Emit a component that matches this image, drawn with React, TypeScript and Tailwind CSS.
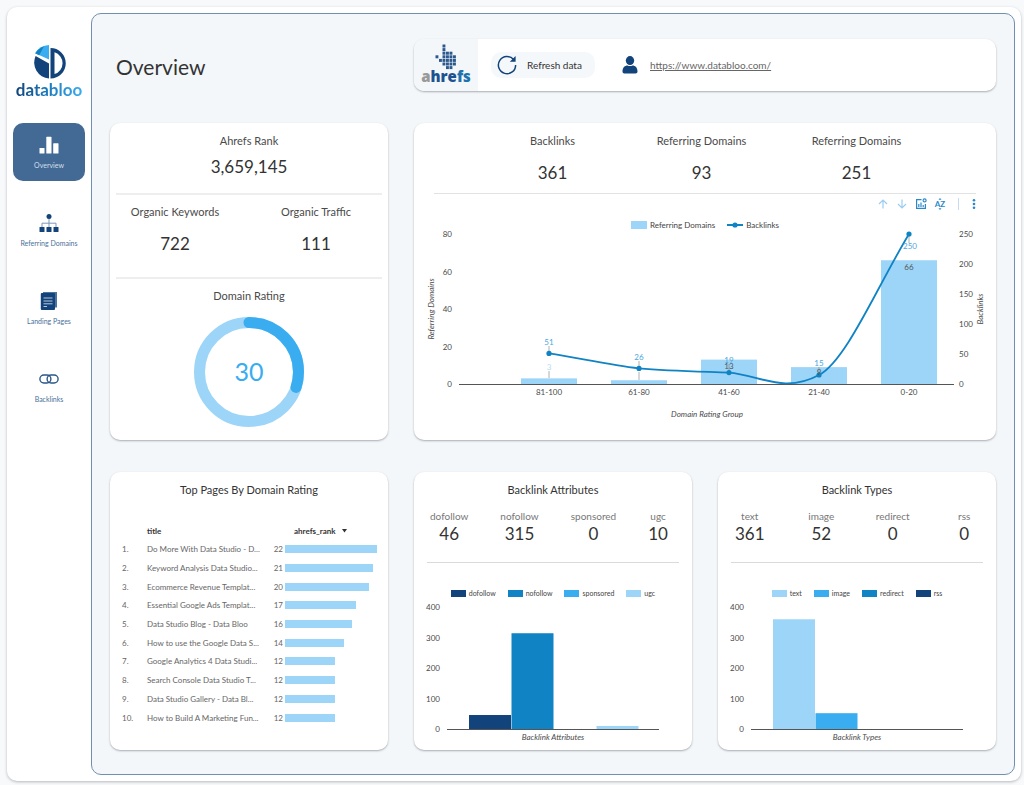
import { useState, type ReactNode } from "react";

const NAVY = "#12437a";
const OCEAN = "#1083c4";
const SKY = "#39adf0";
const PALE = "#9dd5f8";

interface Kpi {
  label: string;
  value: string;
}

interface Series {
  name: string;
  value: number;
  color: string;
}

const TOP_PAGES = [
  { title: "Do More With Data Studio - D...", rank: 22 },
  { title: "Keyword Analysis Data Studio...", rank: 21 },
  { title: "Ecommerce Revenue Templat...", rank: 20 },
  { title: "Essential Google Ads Templat...", rank: 17 },
  { title: "Data Studio Blog - Data Bloo", rank: 16 },
  { title: "How to use the Google Data S...", rank: 14 },
  { title: "Google Analytics 4 Data Studi...", rank: 12 },
  { title: "Search Console Data Studio T...", rank: 12 },
  { title: "Data Studio Gallery - Data Bl...", rank: 12 },
  { title: "How to Build A Marketing Fun...", rank: 12 },
];

const ATTRIBUTES: Series[] = [
  { name: "dofollow", value: 46, color: NAVY },
  { name: "nofollow", value: 315, color: OCEAN },
  { name: "sponsored", value: 0, color: SKY },
  { name: "ugc", value: 10, color: PALE },
];

const TYPES: Series[] = [
  { name: "text", value: 361, color: PALE },
  { name: "image", value: 52, color: SKY },
  { name: "redirect", value: 0, color: OCEAN },
  { name: "rss", value: 0, color: NAVY },
];

const RATING_GROUPS = [
  { group: "81-100", domains: 3, backlinks: 51 },
  { group: "61-80", domains: 2, backlinks: 26 },
  { group: "41-60", domains: 13, backlinks: 19 },
  { group: "21-40", domains: 9, backlinks: 15 },
  { group: "0-20", domains: 66, backlinks: 250 },
];

function Card({ className = "", children }: { className?: string; children: ReactNode }) {
  return (
    <section
      className={`flex flex-col rounded-[10px] bg-white shadow-[0_1px_2px_rgba(60,64,67,0.4)] ${className}`}
    >
      {children}
    </section>
  );
}

function Stat({ label, value, gap = "gap-3" }: Kpi & { gap?: string }) {
  return (
    <div className={`flex flex-col items-center ${gap}`}>
      <div className="text-[11px] leading-4 text-[#4a4a4a]">{label}</div>
      <div className="text-[17px] leading-6 text-[#333]">{value}</div>
    </div>
  );
}

/* ---------- icons ---------- */

function BarsIcon() {
  return (
    <svg width="20" height="18" viewBox="0 0 20 18" fill="#fff">
      <rect x="0.5" y="12" width="5" height="5.5" rx="0.6" />
      <rect x="7.3" y="0.8" width="5.2" height="16.7" rx="0.6" />
      <rect x="14.2" y="7.2" width="5.3" height="10.3" rx="0.6" />
    </svg>
  );
}

function SitemapIcon() {
  return (
    <svg width="20" height="18" viewBox="0 0 20 18" fill={NAVY}>
      <circle cx="10" cy="2.5" r="2.5" />
      <path d="M10 5v8M3 13V9.2h14V13" fill="none" stroke="#7c97b7" strokeWidth="1" />
      <rect x="0.5" y="13" width="5" height="5" rx="0.5" />
      <rect x="7.5" y="13" width="5" height="5" rx="0.5" />
      <rect x="14.5" y="13" width="5" height="5" rx="0.5" />
    </svg>
  );
}

function PagesIcon() {
  return (
    <svg width="20" height="18" viewBox="0 0 20 18">
      <path d="M4 0h14v15.5h-2V2H4z" fill={NAVY} opacity="0.75" />
      <rect x="1.8" y="1" width="14.2" height="17" rx="1" fill={NAVY} />
      <path d="M4.5 6h9M4.5 9h9M4.5 11.8h9M4.5 14.5h3.5" stroke="#b9c9dc" strokeWidth="1" />
    </svg>
  );
}

function LinksIcon() {
  return (
    <svg width="20" height="18" viewBox="0 0 20 18" fill="none" stroke="#2a5788" strokeWidth="1.4">
      <rect x="0.9" y="5" width="11" height="8" rx="4" />
      <rect x="8.1" y="5" width="11" height="8" rx="4" />
    </svg>
  );
}

function DatablooLogo() {
  return (
    <div className="flex flex-col items-center">
      <svg width="36" height="36" viewBox="-2 0 34 36">
        <path d="M15 15.5V1A17 17 0 0 0 1.2 9.2z" fill={SKY} />
        <path d="M10 2.2A17 17 0 0 0 1.2 9.2l4 2.1z" fill={OCEAN} />
        <path d="M15 19.5V34.5A16 16 0 0 1 1.6 12z" fill={NAVY} />
        <path
          fillRule="evenodd"
          fill={NAVY}
          d="M16.5 4a15.2 15.2 0 0 1 0 30.5zM20.5 8.3v21.8a11.4 11.4 0 0 0 0-21.8z"
        />
      </svg>
      <div className="bg-gradient-to-r from-[#12437a] via-[#1b78ba] via-45% to-[#39adf0] bg-clip-text text-[17px] leading-5 font-bold text-transparent">
        databloo
      </div>
    </div>
  );
}

// each row lists the filled columns of the pixel hand
const HAND = [[2], [2], [2, 3, 4], [0, 2, 3, 4, 5], [1, 2, 3, 4, 5], [2, 3, 4, 5], [3, 4]];

function AhrefsLogo() {
  return (
    <div className="flex w-16 flex-col items-center rounded-l-[10px] bg-[#f3f7fa] pt-[5px]">
      <svg width="22" height="26" viewBox="0 0 22 26">
        {HAND.map((cols, row) =>
          cols.map((col) => (
            <rect key={`${row}-${col}`} x={0.5 + col * 3.5} y={0.5 + row * 3.6} width="2.9" height="3" fill="#2c588c" />
          ))
        )}
      </svg>
      <div className="font-['Open_Sans',sans-serif] text-[15px] leading-[13px] font-extrabold text-[#1d5190]">
        <span className="text-[#999]">a</span>hre<span className="text-[#2171ac]">fs</span>
      </div>
    </div>
  );
}

function RefreshIcon() {
  return (
    <svg width="20" height="20" viewBox="0 0 20 20">
      <path d="M16.6 4.6A8.6 8.6 0 1 0 18.6 10" fill="none" stroke={NAVY} strokeWidth="1.5" />
      <path d="M18.6 1v5.8h-5.8z" fill={NAVY} />
    </svg>
  );
}

function UserIcon() {
  return (
    <svg width="16" height="18" viewBox="0 0 16 18" fill={NAVY}>
      <ellipse cx="8" cy="4.6" rx="4.2" ry="4.5" />
      <path d="M0.5 15.5c0-4 2.4-6 5-6 1.6.8 3.4.8 5 0 2.6 0 5 2 5 6 0 1.2-.7 2-2 2h-11c-1.3 0-2-.8-2-2z" />
    </svg>
  );
}

/* ---------- sidebar ---------- */

const NAV = [
  { label: "Overview", icon: <BarsIcon /> },
  { label: "Referring Domains", icon: <SitemapIcon /> },
  { label: "Landing Pages", icon: <PagesIcon /> },
  { label: "Backlinks", icon: <LinksIcon /> },
];

function Sidebar() {
  const [active, setActive] = useState("Overview");
  return (
    <aside className="w-[84px] shrink-0 px-1.5 pt-[37px]">
      <DatablooLogo />
      <nav className="mt-[23px] flex flex-col gap-5">
        {NAV.map((item) => (
          <a
            key={item.label}
            href="#"
            onClick={() => setActive(item.label)}
            className={`flex h-[58px] flex-col items-center gap-1.5 rounded-[10px] pt-[13px] text-[7px] leading-[10px] whitespace-nowrap ${
              active === item.label ? "bg-[#436a95] text-[#d4dfeb]" : "text-[#4a6f99]"
            }`}
          >
            {item.icon}
            {item.label}
          </a>
        ))}
      </nav>
    </aside>
  );
}

/* ---------- top row ---------- */

function HeaderBar() {
  return (
    <header className="col-span-2 flex h-[52px] items-center rounded-[10px] bg-white shadow-[0_1px_2px_rgba(60,64,67,0.4)]">
      <div className="flex self-stretch">
        <AhrefsLogo />
      </div>
      <button className="ml-[13px] flex h-[26px] w-[104px] items-center gap-2.5 rounded-[10px] bg-[#f5f8fa] pl-1.5 text-[10px] text-[#333]">
        <RefreshIcon />
        Refresh data
      </button>
      <div className="ml-[27px] flex items-center gap-3">
        <UserIcon />
        <a href="https://www.databloo.com/" className="text-[10px] text-[#666] underline">
          https://www.databloo.com/
        </a>
      </div>
    </header>
  );
}

function RankCard() {
  const r = 49.5;
  const length = 2 * Math.PI * r;
  return (
    <Card className="pt-2.5 pb-[13px]">
      <Stat label="Ahrefs Rank" value="3,659,145" gap="gap-1.5" />
      <hr className="mx-1.5 mt-3.5 border-t-2 border-[#eee]" />
      <div className="mt-[9px] -mr-1 grid grid-cols-[130fr_152fr]">
        <Stat label="Organic Keywords" value="722" />
        <Stat label="Organic Traffic" value="111" />
      </div>
      <hr className="mx-1.5 mt-[21px] border-t-2 border-[#eee]" />
      <div className="mt-[9px] text-center text-[11px] leading-4 text-[#4a4a4a]">Domain Rating</div>
      <svg width="110" height="110" viewBox="0 0 110 110" className="mx-auto mt-[13px]">
        <circle cx="55" cy="55" r={r} fill="none" stroke={PALE} strokeWidth="11" />
        <circle
          cx="55"
          cy="55"
          r={r}
          fill="none"
          stroke={SKY}
          strokeWidth="11"
          strokeLinecap="round"
          strokeDasharray={`${length * 0.3} ${length}`}
          transform="rotate(-90 55 55)"
        />
        <text x="55" y="64" textAnchor="middle" fontSize="25" fill={SKY}>
          30
        </text>
      </svg>
    </Card>
  );
}

function ChartToolbar() {
  return (
    <div className="mt-[3px] flex h-3.5 items-center justify-end gap-[7px] pr-4 text-[#2b88c8]">
      <button aria-label="Drill up" className="text-[#9ccdf0]">
        <svg width="12" height="12" viewBox="0 0 12 12" fill="none" stroke="currentColor" strokeWidth="1.2">
          <path d="M6 10.500V2M2 6l4-4 4 4" />
        </svg>
      </button>
      <button aria-label="Drill down" className="text-[#9ccdf0]">
        <svg width="12" height="12" viewBox="0 0 12 12" fill="none" stroke="currentColor" strokeWidth="1.2">
          <path d="M6 1.500V10M2 6l4 4 4-4" />
        </svg>
      </button>
      <button aria-label="Optional metrics">
        <svg width="12" height="12" viewBox="0 0 12 12" fill="none" stroke="currentColor" strokeWidth="1.2">
          <path d="M6.5 1.6H1.6v8.8h8.8V6M3.8 9V6M6 9V4.5M8.2 9V7" />
          <circle cx="9.6" cy="2.4" r="1.5" />
        </svg>
      </button>
      <button aria-label="Sort">
        <svg width="12" height="12" viewBox="0 0 12 12" fill="currentColor">
          <text x="6" y="9" textAnchor="middle" fontSize="8" fontWeight="700">
            AZ
          </text>
          <path d="M4.5 1.8L6 0l1.5 1.8zM4.5 10.2L6 12l1.5-1.8z" />
        </svg>
      </button>
      <span className="mr-0.5 ml-[5px] h-3 w-px bg-[#c5dcee]" />
      <button aria-label="More options">
        <svg width="12" height="12" viewBox="0 0 12 12" fill="currentColor">
          <circle cx="6" cy="2.2" r="1.3" />
          <circle cx="6" cy="6" r="1.3" />
          <circle cx="6" cy="9.8" r="1.3" />
        </svg>
      </button>
    </div>
  );
}

function RatingGroupChart() {
  const base = 153;
  const x = (i: number) => 135 + i * 90;
  const yLeft = (v: number) => base - (v / 80) * 150;
  const yRight = (v: number) => base - (v / 250) * 150;

  return (
    <svg viewBox="0 0 582 195" className="block w-full overflow-visible" fontSize="8" fill="#4a4a4a">
      {[0, 20, 40, 60, 80].map((v) => (
        <text key={v} x="38" y={yLeft(v) + 3} textAnchor="end">
          {v}
        </text>
      ))}
      {[0, 50, 100, 150, 200, 250].map((v) => (
        <text key={v} x="545" y={yRight(v) + 3}>
          {v}
        </text>
      ))}
      {RATING_GROUPS.map((d, i) => (
        <g key={d.group}>
          <rect x={x(i) - 28} y={yLeft(d.domains)} width="56" height={base - yLeft(d.domains)} fill={PALE} />
          <text x={x(i)} y="164" textAnchor="middle">
            {d.group}
          </text>
        </g>
      ))}
      <path d="M45 153.5H540" stroke="#555" strokeWidth="1" />

      {/* leader lines */}
      <path
        d="M135 115v7M135 140v7M225 130v7M225 141v8M315 133v8M405 136v8M495 5v7"
        stroke="#8d8d8d"
        strokeWidth="0.7"
      />

      <path
        d="M135 122.4C165 127 195 134 225 137.4C255 140 285 140.5 315 141.6C345 144 370 163 405 144C432 130 463 56 495 3"
        fill="none"
        stroke={OCEAN}
        strokeWidth="1.8"
      />
      {RATING_GROUPS.map((d, i) => (
        <circle key={d.group} cx={x(i)} cy={yRight(d.backlinks)} r="2.6" fill={OCEAN} />
      ))}

      <g textAnchor="middle" fill="#4ba6de">
        <text x="135" y="114">51</text>
        <text x="135" y="139" fill="#b5dcf5">3</text>
        <text x="225" y="129">26</text>
        <text x="315" y="132">19</text>
        <text x="315" y="138" fill="#555">13</text>
        <text x="405" y="135">15</text>
        <text x="405" y="144" fill="#555">9</text>
        <text x="496" y="18">250</text>
        <text x="495" y="39" fill="#555">66</text>
      </g>

      <g textAnchor="middle" fontStyle="italic">
        <text x="293" y="186">Domain Rating Group</text>
        <text transform="translate(20 78) rotate(-90)">Referring Domains</text>
        <text transform="translate(569 78) rotate(-90)">Backlinks</text>
      </g>
    </svg>
  );
}

function BacklinksCard() {
  return (
    <Card className="col-span-2 pt-2.5 pb-3.5">
      <div className="grid grid-cols-[149fr_149fr_161fr] pr-[59px] pl-16">
        <Stat label="Backlinks" value="361" />
        <Stat label="Referring Domains" value="93" />
        <Stat label="Referring Domains" value="251" />
      </div>
      <hr className="mx-5 mt-2 border-[#e2e2e2]" />
      <ChartToolbar />
      <div className="mt-2 flex h-3 items-center justify-center gap-3 text-[8px] text-[#444]">
        <span className="flex items-center gap-[3px]">
          <span className="h-2 w-4 bg-[#9dd5f8]" />
          Referring Domains
        </span>
        <span className="flex items-center gap-[3px]">
          <svg width="16" height="8" viewBox="0 0 16 8" fill={OCEAN}>
            <rect y="3" width="16" height="2" />
            <circle cx="8" cy="4" r="2.6" />
          </svg>
          Backlinks
        </span>
      </div>
      <RatingGroupChart />
    </Card>
  );
}

/* ---------- bottom row ---------- */

function TopPagesCard() {
  const [desc, setDesc] = useState(true);
  const rows = desc ? TOP_PAGES : [...TOP_PAGES].reverse();
  return (
    <Card className="pt-2.5">
      <h2 className="text-center text-[11px] leading-4 text-[#333]">Top Pages By Domain Rating</h2>
      <div className="mt-6 pr-[11px] pl-3">
        <table className="h-[205px] w-full table-fixed text-[8px] leading-[10px] text-[#666]">
          <colgroup>
            <col className="w-[25px]" />
            <col />
            <col className="w-4" />
            <col className="w-[92px]" />
          </colgroup>
          <thead>
            <tr className="h-[18px] text-left text-[#333]">
              <th />
              <th>title</th>
              <th colSpan={2} className="pl-[25px]">
                <button onClick={() => setDesc(!desc)} className="flex items-center gap-1.5 font-bold">
                  ahrefs_rank
                  <svg width="5" height="4" viewBox="0 0 5 4" fill="#333">
                    <path d={desc ? "M0 0h5L2.5 3.5z" : "M0 3.5h5L2.5 0z"} />
                  </svg>
                </button>
              </th>
            </tr>
          </thead>
          <tbody>
            {rows.map((p, i) => (
              <tr key={p.title}>
                <td>{i + 1}.</td>
                <td className="whitespace-nowrap">{p.title}</td>
                <td className="pr-0.5 text-right">{p.rank}</td>
                <td>
                  <div className="h-2 bg-[#9dd5f8]" style={{ width: `${(p.rank / 22) * 100}%` }} />
                </td>
              </tr>
            ))}
          </tbody>
        </table>
      </div>
    </Card>
  );
}

interface SeriesCardProps {
  title: string;
  series: Series[];
  statsClassName: string;
}

function SeriesCard({ title, series, statsClassName }: SeriesCardProps) {
  const base = 125;
  const scale = 0.304;
  return (
    <Card className="pt-2.5">
      <h2 className="text-center text-[11px] leading-4 text-[#333]">{title}</h2>
      <div className={`mt-3 ${statsClassName}`}>
        {series.map((s) => (
          <div key={s.name} className="flex flex-col items-center">
            <div className="text-[10px] leading-3 text-[#777]">{s.name}</div>
            <div className="text-[17px] leading-6 text-[#333]">{s.value}</div>
          </div>
        ))}
      </div>
      <hr className="mx-[13px] mt-4 border-[#dadada]" />
      <div className="mt-6 flex h-3 items-center justify-center gap-3 text-[7px] text-[#444]">
        {series.map((s) => (
          <span key={s.name} className="flex items-center gap-[3px]">
            <span className="h-[7px] w-[15px]" style={{ backgroundColor: s.color }} />
            {s.name}
          </span>
        ))}
      </div>
      <svg viewBox="0 0 278 146" className="mt-[5px] block w-full overflow-visible" fontSize="8" fill="#4a4a4a">
        {[0, 100, 200, 300, 400].map((v) => (
          <text key={v} x="26" y={base + 3 - v * scale} textAnchor="end">
            {v}
          </text>
        ))}
        {series.map((s, i) => (
          <rect
            key={s.name}
            x={55 + i * 42.5}
            y={base - s.value * scale}
            width="42"
            height={s.value * scale}
            fill={s.color}
          />
        ))}
        <path d="M33 125.5H245" stroke="#555" strokeWidth="1" />
        <text x="139" y="136" textAnchor="middle" fontStyle="italic">
          {title}
        </text>
      </svg>
    </Card>
  );
}

export default function App() {
  return (
    <div className="min-h-screen bg-[#f8f9fb] pt-[7px] pr-[3px] pb-[3px] pl-[7px] font-[Lato,'Open_Sans',sans-serif]">
      <div className="flex rounded-[10px] bg-white shadow-[0_1px_3px_rgba(60,64,67,0.35)]">
        <Sidebar />
        <main className="mt-1.5 mr-1.5 mb-1.5 min-w-0 flex-1 rounded-[10px] border border-[#6f8fb3] bg-[#f3f7fa] px-[18px] pt-[25px] pb-6">
          <div className="grid grid-cols-3 gap-x-[26px] gap-y-8">
            <h1 className="flex items-center pt-1 pl-1.5 text-[21px] text-[#333]">Overview</h1>
            <HeaderBar />
            <RankCard />
            <BacklinksCard />
            <TopPagesCard />
            <SeriesCard
              title="Backlink Attributes"
              series={ATTRIBUTES}
              statsClassName="flex justify-between pl-4 pr-6"
            />
            <SeriesCard title="Backlink Types" series={TYPES} statsClassName="-mx-1 grid grid-cols-4" />
          </div>
        </main>
      </div>
    </div>
  );
}
